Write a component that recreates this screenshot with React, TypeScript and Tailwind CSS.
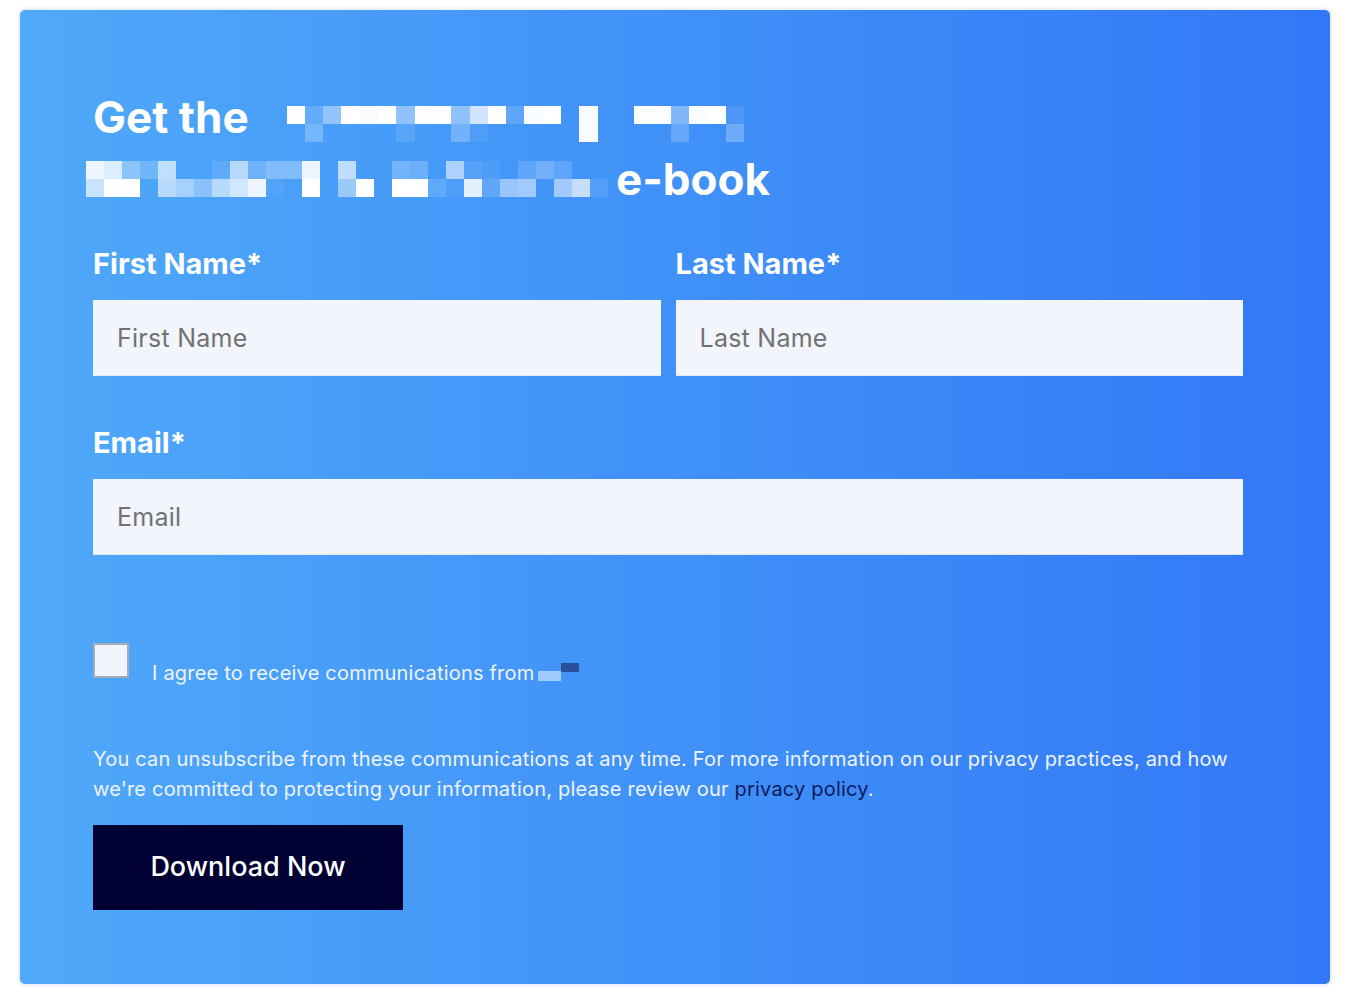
import React from 'react';

const font = { fontFamily: 'Inter, "Noto Sans", sans-serif' };

// redacted words in the title, drawn as a mosaic: each value is the white opacity of one cell
const mosaicLine1 = [
  [1, 0.15, 0.4, 1, 0.97, 1, 0.4, 0.98, 1, 0.4, 0.75, 1, 0.15, 0.97, 1, 0, 0.97, 0, 0, 0.98, 0.98, 0.35, 0.97, 1, 0.08],
  [0, 0.25, 0, 0, 0, 0, 0.1, 0, 0, 0.25, 0.05, 0, 0, 0, 0, 0, 0.97, 0, 0, 0, 0, 0.2, 0, 0, 0.25],
];

const mosaicLine2 = [
  [0.9, 0.8, 0.35, 0.2, 0.65, 0, 0, 0.1, 0.6, 0.2, 0.3, 0.3, 0.9, 0, 0.65, 0, 0, 0.25, 0.2, 0, 0.55, 0.1, 0.05, 0, 0.15, 0.25, 0.15, 0, 0],
  [0.7, 0.98, 1, 0, 0.6, 0.5, 0.35, 0.6, 0.75, 0.9, 0.05, 0, 1, 0, 0.45, 1, 0, 1, 1, 0.15, 0.05, 0.85, 0.15, 0.45, 0.5, 0, 0.5, 0.7, 0.1],
];

function Mosaic({ rows, wide }: { rows: number[][]; wide?: boolean }) {
  return (
    <div className="flex flex-col">
      {rows.map((row, r) => (
        <div key={r} className="flex">
          {row.map((o, c) => (
            <span
              key={c}
              className={wide ? 'block h-[18px] w-[18.3px] bg-white' : 'block h-[18px] w-[18px] bg-white'}
              style={{ opacity: o }}
            />
          ))}
        </div>
      ))}
    </div>
  );
}

function Field({ label, placeholder }: { label: string; placeholder: string }) {
  return (
    <div className="flex-1">
      <label className="block text-[29px] font-bold leading-[36px] text-white">{label}</label>
      <input
        type="text"
        placeholder={placeholder}
        className="mt-[18px] block h-[76px] w-full border-b border-[#dfe7f6] bg-[#f2f5fc] px-[24px] text-[25px] tracking-[0.01em] text-[#333] outline-none placeholder:text-[#727272]"
        style={font}
      />
    </div>
  );
}

export default function App() {
  return (
    <div className="min-h-screen bg-white pt-[10px] pl-[20px]" style={font}>
      <div className="h-[974px] w-[1310px] rounded-[5px] bg-gradient-to-r from-[#50a9f9] to-[#3377f6] pl-[73px] pr-[87px] pt-[76px] shadow-[0_0_3px_2px_rgba(225,232,245,0.8)]">
        <h1 className="text-[44px] font-bold leading-[62px] text-white">
          <div className="flex items-start">
            <span>Get the</span>
            <div className="ml-[38px] mt-[20px]">
              <Mosaic rows={mosaicLine1} wide />
            </div>
          </div>
          <div className="-ml-[7px] flex items-start">
            <div className="mt-[13px]">
              <Mosaic rows={mosaicLine2} />
            </div>
            <span className="ml-[8px]">e-book</span>
          </div>
        </h1>

        <div className="mt-[36px] flex gap-[15px]">
          <Field label="First Name*" placeholder="First Name" />
          <Field label="Last Name*" placeholder="Last Name" />
        </div>

        <div className="mt-[49px]">
          <Field label="Email*" placeholder="Email" />
        </div>

        <div className="mt-[88px] flex items-start">
          <span className="block h-[35px] w-[36px] shrink-0 border-2 border-[#a3abbd] bg-[#f2f5fc]" />
          <span className="ml-[23px] mt-[18px] flex items-end text-[20px] leading-[24px] tracking-[0.01em] text-[#eef4fe]">
            I agree to receive communications from
            <span className="ml-[4px] mb-[4px] flex items-start">
              <span className="mt-[8px] block h-[10px] w-[23px] bg-white/50" />
              <span className="block h-[9px] w-[18px] bg-[#2c4f9b]" />
            </span>
          </span>
        </div>

        <p className="mt-[59px] text-[20px] leading-[30px] tracking-[0.01em] text-[#eef4fe]">
          You can unsubscribe from these communications at any time. For more information on our privacy practices, and how
          <br />
          we're committed to protecting your information, please review our{' '}
          <a href="#" className="text-[#0b1a5c]">privacy policy</a>.
        </p>

        <button className="mt-[21px] flex h-[85px] w-[310px] items-center justify-center bg-[#000033] text-[27px] font-medium text-white">
          Download Now
        </button>
      </div>
    </div>
  );
}
